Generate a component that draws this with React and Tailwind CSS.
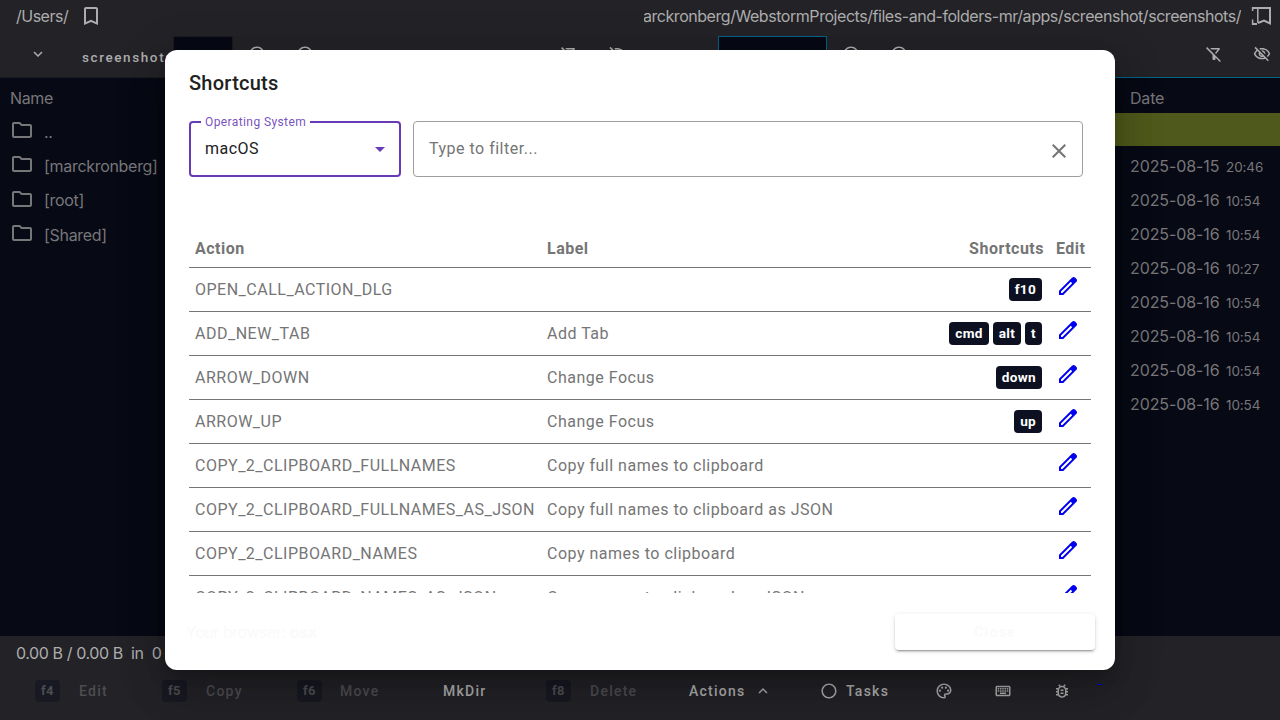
import React from "react";
import {
  MdBookmarkBorder, MdOutlineFolder, MdExpandMore, MdExpandLess, MdOutlineFilterAltOff,
  MdOutlineVisibilityOff, MdOutlinePalette, MdOutlineKeyboard, MdOutlineBugReport,
  MdClose, MdRadioButtonUnchecked,
} from "react-icons/md";

const folders = ["..", "[marckronberg]", "[root]", "[Shared]"];
const dates = [
  ["2025-08-15", "20:46"], ["2025-08-16", "10:54"], ["2025-08-16", "10:54"], ["2025-08-16", "10:27"],
  ["2025-08-16", "10:54"], ["2025-08-16", "10:54"], ["2025-08-16", "10:54"], ["2025-08-16", "10:54"],
];
const shortcuts = [
  ["OPEN_CALL_ACTION_DLG", "", ["f10"]],
  ["ADD_NEW_TAB", "Add Tab", ["cmd", "alt", "t"]],
  ["ARROW_DOWN", "Change Focus", ["down"]],
  ["ARROW_UP", "Change Focus", ["up"]],
  ["COPY_2_CLIPBOARD_FULLNAMES", "Copy full names to clipboard", []],
  ["COPY_2_CLIPBOARD_FULLNAMES_AS_JSON", "Copy full names to clipboard as JSON", []],
  ["COPY_2_CLIPBOARD_NAMES", "Copy names to clipboard", []],
  ["COPY_2_CLIPBOARD_NAMES_AS_JSON", "Copy names to clipboard as JSON", []],
];

function PencilIcon({ className }) {
  return (
    <svg className={className} viewBox="0 -960 960 960" fill="currentColor">
      <path d="M200-200h57l391-391-57-57-391 391v57Zm-80 80v-170l528-527q12-11 26.5-17t30.5-6q16 0 31 6t26 18l55 56q12 11 17.5 26t5.5 30q0 16-5.5 30.5T817-647L290-120H120Z" />
    </svg>
  );
}

function LeftPanel() {
  return (
    <section className="flex w-[640px] flex-col">
      <div className="flex h-9 items-center bg-[#232227] pb-1 pl-4">
        <span className="w-[53px] whitespace-nowrap tracking-[-0.5px]">/Users/</span>
        <MdBookmarkBorder className="ml-2.5 size-6" />
      </div>
      <div className="flex h-[42px] border-b border-[#1b1a20] bg-[#232227]">
        <MdExpandMore className="ml-[29px] mt-[9px] size-[18px]" />
        <span className="ml-[35px] w-[91px] pt-[11px] font-[Roboto] text-[13.5px] leading-5 font-medium tracking-[1.6px]">screenshots</span>
        <div className="h-[42px] w-[60px] border border-[#1b1a20] bg-[#070914]" />
        <MdRadioButtonUnchecked className="ml-[15px] mt-[9px] size-[18px]" />
        <MdRadioButtonUnchecked className="ml-[30px] mt-[9px] size-[18px]" />
        <MdOutlineFilterAltOff className="ml-auto mt-[9px] size-[18px]" />
        <MdOutlineVisibilityOff className="ml-[30px] mr-[14px] mt-[9px] size-[18px]" />
      </div>
      <div className="flex-1 text-[#77777a]">
        <div className="flex h-[35px] items-center pl-2.5 pt-1 tracking-[-0.35px]">Name</div>
        {folders.map((f) => (
          <div key={f} className="flex h-[34.3px] items-center pl-2.5">
            <MdOutlineFolder className="size-6" />
            <span className="ml-2.5 pt-[3px] tracking-[-0.3px]">{f}</span>
          </div>
        ))}
      </div>
    </section>
  );
}

function RightPanel() {
  return (
    <section className="flex w-[640px] flex-col">
      <div className="flex h-9 items-center bg-[#232227] pb-1 pl-1">
        <div className="flex w-[597px] justify-end overflow-hidden whitespace-nowrap tracking-[-0.45px]">
          <span>/Users/marckronberg/WebstormProjects/files-and-folders-mr/apps/screenshot/screenshots/</span>
        </div>
        <svg className="ml-[9px] size-6" viewBox="0 0 24 24" fill="none" stroke="currentColor" strokeWidth="2">
          <path d="M2 4h5M8 4h12v15.5l-6-3-6 2.5M7 20H2" />
          <path d="M2.6 3v4M7.8 3v16M2.6 15.5V21" strokeWidth="1.5" />
        </svg>
      </div>
      <div className="flex h-[42px] border-b border-[#006389] bg-[#232227]">
        <div className="ml-[78px] h-[42px] w-[109px] border border-b-0 border-[#006389] bg-[#070914]" />
        <MdRadioButtonUnchecked className="ml-[15px] mt-[9px] size-[18px]" />
        <MdRadioButtonUnchecked className="ml-[30px] mt-[9px] size-[18px]" />
        <MdOutlineFilterAltOff className="ml-auto mt-[9px] size-[18px]" />
        <MdOutlineVisibilityOff className="ml-[30px] mr-[9px] mt-[9px] size-[18px]" />
      </div>
      <div className="flex-1 text-[#77777a]">
        <div className="flex h-[35px] items-center pl-[490px] pt-1 tracking-[-0.2px]">Date</div>
        <div className="h-[33px] bg-[#4f591b]" />
        <div className="pt-1">
          {dates.map(([d, t], i) => (
            <div key={i} className="flex h-[34px] items-baseline whitespace-nowrap pl-[490px] pt-1">
              <span className="w-24 tracking-[-0.1px]">{d}</span>
              <span className="text-[13.5px] tracking-[-0.1px]">{t}</span>
            </div>
          ))}
        </div>
      </div>
    </section>
  );
}

function KeyCap({ children }) {
  return <span className="flex h-[22px] w-[25px] items-center justify-center rounded bg-[#181922] pt-px font-[Roboto] text-[13px] font-bold tracking-[0.5px]">{children}</span>;
}

function BottomBar() {
  return (
    <footer className="h-[84px] bg-[#232227]">
      <div className="h-9 whitespace-pre pl-4 pt-[5px] tracking-[-0.4px]">0.00 B / 0.00 B  in  0 / 0 files</div>
      <div className="flex h-[38px] items-center whitespace-nowrap font-[Roboto] text-sm font-medium tracking-[1.25px]">
        <div className="flex w-[162px] items-center pl-[35px] text-[#4d4d51]"><KeyCap>f4</KeyCap><span className="ml-[19px]">Edit</span></div>
        <div className="flex w-[135px] items-center text-[#4d4d51]"><KeyCap>f5</KeyCap><span className="ml-[19px]">Copy</span></div>
        <div className="flex w-[146px] items-center text-[#4d4d51]"><KeyCap>f6</KeyCap><span className="ml-[18px]">Move</span></div>
        <span className="w-[103px]">MkDir</span>
        <div className="flex w-[143px] items-center text-[#4d4d51]"><KeyCap>f8</KeyCap><span className="ml-[19px]">Delete</span></div>
        <div className="flex w-[131px] items-center">Actions<MdExpandLess className="ml-2 size-[18px]" /></div>
        <div className="flex w-[115px] items-center"><MdRadioButtonUnchecked className="mr-2 size-[18px]" />Tasks</div>
        <MdOutlinePalette className="size-[18px]" />
        <MdOutlineKeyboard className="ml-[41px] size-[18px]" />
        <MdOutlineBugReport className="ml-[41px] size-[18px]" />
        <div className="mb-[13px] ml-[26px] h-px w-[5px] bg-[#0000e0]" />
      </div>
    </footer>
  );
}

function ShortcutsDialog() {
  return (
    <div role="dialog" className="absolute left-[165px] top-[50px] flex h-[620px] w-[950px] flex-col overflow-hidden rounded-xl bg-white font-[Roboto] text-[#757575] shadow-[0_11px_15px_-7px_rgba(0,0,0,0.2),0_24px_38px_3px_rgba(0,0,0,0.14),0_9px_46px_8px_rgba(0,0,0,0.12)]">
      <h2 className="h-[71px] pl-6 pt-[17px] text-xl font-medium leading-8 tracking-[0.25px] text-[#212121]">Shortcuts</h2>
      <div className="flex h-14 gap-3 pl-6">
        <div className="relative flex w-[212px] items-center justify-between rounded border-2 border-[#673ab7] pl-3.5 pr-3.5 text-[#212121]">
          <span className="absolute -top-[9px] left-2.5 bg-white px-1 text-xs tracking-[0.4px] whitespace-nowrap text-[#673ab7]/90">Operating System</span>
          <span className="tracking-[0.5px]">macOS</span>
          <svg className="h-[5px] w-2.5" viewBox="0 0 10 5"><path d="M0 0h10L5 5z" fill="#673ab7" /></svg>
        </div>
        <div className="flex w-[670px] items-center justify-between rounded border border-[#9e9e9e] pl-[15px] pr-[11px]">
          <span className="tracking-[0.5px]">Type to filter...</span>
          <MdClose className="mt-1 size-6" />
        </div>
      </div>
      <div className="mt-[53px] h-[363px] overflow-hidden pl-6">
        <div className="w-[902px] tracking-[0.5px]">
          <div className="flex h-[38px] items-center border-b border-[#757575] font-bold">
            <span className="w-[352px] pl-1.5">Action</span>
            <span className="flex-1 pl-1.5">Label</span>
            <span className="pr-3">Shortcuts</span>
            <span className="w-[35px]">Edit</span>
          </div>
          {shortcuts.map(([action, label, keys]) => (
            <div key={action} className="flex h-11 items-center border-b border-[#757575] whitespace-nowrap">
              <span className="w-[352px] pl-1.5">{action}</span>
              <span className="flex-1 pl-1.5">{label}</span>
              <div className="flex gap-1 pr-3.5">
                {keys.map((k) => (
                  <kbd key={k} className="flex h-[23px] items-center rounded bg-[#0d1021] px-1.5 font-[Roboto] text-[13.6px] font-bold tracking-[0.3px] text-white">{k}</kbd>
                ))}
              </div>
              <PencilIcon className="mb-2 mr-[11px] size-6 text-[#0000ee]" />
            </div>
          ))}
        </div>
      </div>
      <div className="flex flex-1 items-start justify-between pl-[21px] pr-5 pt-[21px] text-[#fafafa]">
        <span className="pt-1.5 font-[Inter] tracking-[-0.45px]">Your browser: <b>osx</b></span>
        <button className="h-9 w-[200px] rounded bg-white text-sm font-medium tracking-[1.25px] shadow-[0_3px_1px_-2px_rgba(0,0,0,0.2),0_2px_2px_0_rgba(0,0,0,0.14),0_1px_5px_0_rgba(0,0,0,0.12)]">Close</button>
      </div>
    </div>
  );
}

export default function App() {
  return (
    <main className="relative flex h-[720px] w-[1280px] flex-col overflow-hidden bg-[#070914] font-[Inter,sans-serif] text-base text-[#adadad]">
      <div className="flex flex-1">
        <LeftPanel />
        <RightPanel />
      </div>
      <BottomBar />
      <ShortcutsDialog />
    </main>
  );
}
